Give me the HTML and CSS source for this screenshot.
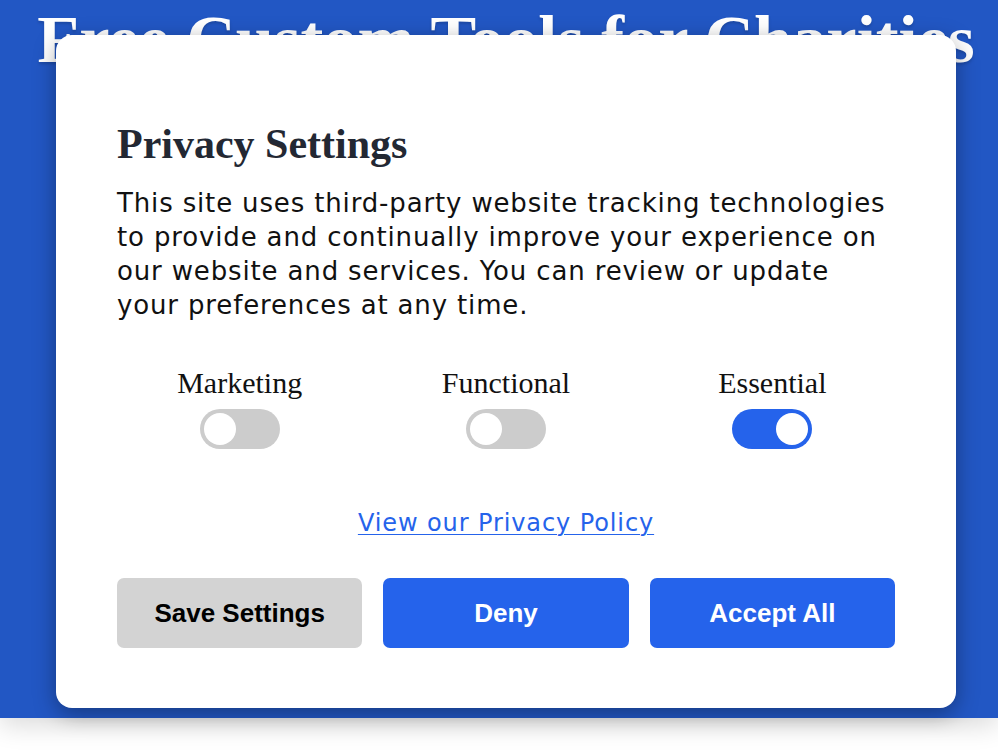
FILE: index.html
```html
<!DOCTYPE html>
<html lang="en">
<head>
<meta charset="utf-8">
<title>Privacy Settings</title>
<link rel="stylesheet" href="styles.css">
</head>
<body>
  <header class="hero">
    <h1 class="hero-title">Free Custom Tools for Charities</h1>
  </header>
  <div class="modal" role="dialog" aria-labelledby="ps-title">
    <h2 class="modal-title" id="ps-title">Privacy Settings</h2>
    <p class="modal-text">This site uses third-party website tracking technologies to provide and continually improve your experience on our website and services. You can review or update your preferences at any time.</p>
    <div class="grid toggles">
      <div class="toggle-item">
        <span class="toggle-label">Marketing</span>
        <span class="switch"><span class="knob"></span></span>
      </div>
      <div class="toggle-item">
        <span class="toggle-label">Functional</span>
        <span class="switch"><span class="knob"></span></span>
      </div>
      <div class="toggle-item">
        <span class="toggle-label">Essential</span>
        <span class="switch on"><span class="knob"></span></span>
      </div>
    </div>
    <div class="policy"><a class="policy-link" href="#">View our Privacy Policy</a></div>
    <div class="grid buttons">
      <button class="btn btn-grey">Save Settings</button>
      <button class="btn btn-blue">Deny</button>
      <button class="btn btn-blue">Accept All</button>
    </div>
  </div>
</body>
</html>
```
FILE: styles.css
```css
* { box-sizing: border-box; }
html, body { margin: 0; padding: 0; }
body {
  background: #ffffff;
  width: 998px;
  height: 754px;
  overflow: hidden;
  position: relative;
}
.hero {
  height: 718px;
  background: #2257c4;
  box-shadow: 0 8px 24px rgba(0, 0, 0, 0.14);
  padding-left: 14px;
  overflow: hidden;
}
.hero-title {
  margin: 0;
  font-family: "Liberation Serif", "Times New Roman", serif;
  font-weight: 700;
  font-size: 68.5px;
  line-height: 78px;
  color: #ffffff;
  text-align: center;
  white-space: nowrap;
  text-shadow: 0 2px 3px rgba(0, 0, 0, 0.18);
}
.modal {
  position: absolute;
  left: 56px;
  top: 35px;
  width: 900px;
  background: #ffffff;
  border-radius: 16px;
  padding: 60px 61px 60px 61px;
  box-shadow: 0 6px 22px rgba(0, 0, 0, 0.35);
}
.modal-title {
  margin: 24px 0 0 0;
  font-family: "Liberation Serif", "Times New Roman", serif;
  font-weight: 700;
  font-size: 42px;
  line-height: 50px;
  color: #232833;
}
.modal-text {
  margin: 17px 0 0 0;
  font-family: "DejaVu Sans", sans-serif;
  font-size: 26px;
  letter-spacing: 0.85px;
  line-height: 34px;
  color: #111111;
}
.grid {
  display: grid;
  grid-template-columns: repeat(3, 1fr);
  column-gap: 21px;
}
.toggles { margin-top: 43px; }
.toggle-item {
  display: flex;
  flex-direction: column;
  align-items: center;
  gap: 8px;
}
.toggle-label {
  font-family: "Liberation Serif", "Times New Roman", serif;
  font-size: 30px;
  line-height: 36px;
  color: #111111;
}
.switch {
  display: flex;
  align-items: center;
  width: 80px;
  height: 40px;
  padding: 4px;
  border-radius: 20px;
  background: #cccccc;
}
.switch.on {
  background: #2563eb;
  justify-content: flex-end;
}
.knob {
  width: 32px;
  height: 32px;
  border-radius: 50%;
  background: #ffffff;
}
.policy {
  margin-top: 57px;
  text-align: center;
  font-family: "DejaVu Sans", sans-serif;
  font-size: 24px;
  letter-spacing: 0.9px;
  line-height: 34px;
}
.policy-link {
  color: #2563eb;
  text-decoration: underline;
  text-underline-offset: 3px;
  text-decoration-thickness: 1px;
}
.buttons { margin-top: 38px; }
.btn {
  height: 70px;
  border: none;
  border-radius: 7px;
  font-family: "Liberation Sans", Arial, sans-serif;
  font-weight: 700;
  font-size: 26px;
  padding: 0;
}
.btn-grey { background: #d3d3d3; color: #000000; }
.btn-blue { background: #2563eb; color: #ffffff; }
```
